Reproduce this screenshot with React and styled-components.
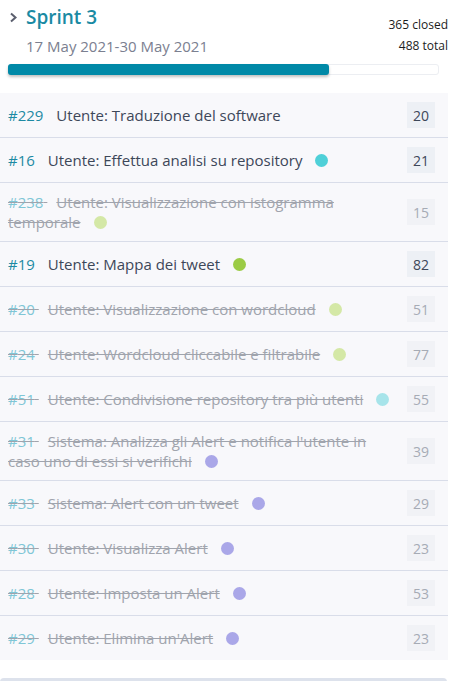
import styled, { createGlobalStyle } from 'styled-components';

const GlobalStyle = createGlobalStyle`
  body {
    margin: 0;
    background: #ffffff;
    font-family: "Open Sans", "Noto Sans", sans-serif;
  }
`;

const Page = styled.div`
  width: 454px;
  overflow: hidden;
`;

const Header = styled.div`
  display: flex;
  justify-content: space-between;
  align-items: flex-start;
  padding: 5px 6px 0 8px;
`;

const TitleBlock = styled.div`
  display: flex;
  flex-direction: column;
`;

const TitleRow = styled.div`
  display: flex;
  align-items: center;
  gap: 7px;
`;

const Title = styled.h2`
  margin: 0;
  font-size: 19px;
  font-weight: 600;
  color: #1a8aa3;
  line-height: 25px;
`;

const Dates = styled.div`
  margin-top: 6px;
  margin-left: 18px;
  font-size: 15px;
  color: #7b8090;
  line-height: 20px;
`;

const Stats = styled.div`
  display: flex;
  flex-direction: column;
  align-items: flex-end;
  gap: 5px;
  padding-top: 12px;
  font-size: 12px;
  color: #1c1c1c;
  line-height: 16px;
`;

const Track = styled.div`
  margin: 8px 15px 0 8px;
  height: 11px;
  border-radius: 3px;
  background: #ffffff;
  border: 1px solid #eceef2;
  box-sizing: border-box;
`;

const Fill = styled.div`
  height: 11px;
  margin-top: -1px;
  margin-left: -1px;
  border-radius: 3px;
  background: #0089a7;
  box-shadow: 0 2px 3px rgba(0, 0, 0, 0.25);
`;

const List = styled.ul`
  list-style: none;
  margin: 18px 6px 0 0;
  padding: 0;
  background: #f8f8fb;
`;

const Row = styled.li`
  display: flex;
  align-items: center;
  justify-content: space-between;
  padding: 9px 13px 9px 8px;
  min-height: 26px;
  border-bottom: 1px solid #d9dde9;
  &:last-child {
    border-bottom: none;
  }
`;

const Text = styled.div`
  flex: 1;
  font-size: 15px;
  line-height: 20px;
  padding-right: 12px;
  color: ${({ $done }) => ($done ? '#a0a4ad' : '#3d4759')};
  text-decoration: ${({ $done }) => ($done ? 'line-through' : 'none')};
`;

const Id = styled.span`
  color: ${({ $done }) => ($done ? '#7fc6d6' : '#1d8aa3')};
  margin-right: 9px;
`;

const Dot = styled.span`
  display: inline-block;
  width: 13px;
  height: 13px;
  border-radius: 50%;
  background: ${({ $color }) => $color};
  margin-left: 13px;
  vertical-align: -1px;
`;

const Count = styled.span`
  flex: none;
  width: 28px;
  height: 26px;
  display: flex;
  align-items: center;
  justify-content: center;
  font-size: 14px;
  background: ${({ $done }) => ($done ? '#f1f2f6' : '#edf0f5')};
  color: ${({ $done }) => ($done ? '#a6abb5' : '#3d4759')};
`;

const Footer = styled.div`
  margin: 18px 7px 0 0;
  height: 20px;
  border-radius: 4px;
  background: #dde2ec;
`;

const issues = [
  { id: 229, title: 'Utente: Traduzione del software', count: 20 },
  { id: 16, title: 'Utente: Effettua analisi su repository', dot: '#4fd0d8', count: 21 },
  { id: 238, title: 'Utente: Visualizzazione con istogramma temporale', dot: '#d4e8a6', count: 15, done: true },
  { id: 19, title: 'Utente: Mappa dei tweet', dot: '#9bcb45', count: 82 },
  { id: 20, title: 'Utente: Visualizzazione con wordcloud', dot: '#d4e8a6', count: 51, done: true },
  { id: 24, title: 'Utente: Wordcloud cliccabile e filtrabile', dot: '#d4e8a6', count: 77, done: true },
  { id: 51, title: 'Utente: Condivisione repository tra più utenti', dot: '#a7e4ea', count: 55, done: true },
  { id: 31, title: "Sistema: Analizza gli Alert e notifica l'utente in caso uno di essi si verifichi", dot: '#aaa7e8', count: 39, done: true },
  { id: 33, title: 'Sistema: Alert con un tweet', dot: '#aaa7e8', count: 29, done: true },
  { id: 30, title: 'Utente: Visualizza Alert', dot: '#aaa7e8', count: 23, done: true },
  { id: 28, title: 'Utente: Imposta un Alert', dot: '#aaa7e8', count: 53, done: true },
  { id: 29, title: "Utente: Elimina un'Alert", dot: '#aaa7e8', count: 23, done: true },
];

const closed = 365;
const total = 488;

export default function App() {
  return (
    <Page>
      <GlobalStyle />
      <Header>
        <TitleBlock>
          <TitleRow>
            <svg width="11" height="11" viewBox="0 0 11 11">
              <path d="M3 1.5 L7.5 5.5 L3 9.5" fill="none" stroke="#5b5f6e" strokeWidth="2" />
            </svg>
            <Title>Sprint 3</Title>
          </TitleRow>
          <Dates>17 May 2021-30 May 2021</Dates>
        </TitleBlock>
        <Stats>
          <span>{closed} closed</span>
          <span>{total} total</span>
        </Stats>
      </Header>
      <Track>
        <Fill style={{ width: `${(closed / total) * 100}%` }} />
      </Track>
      <List>
        {issues.map((it) => (
          <Row key={it.id}>
            <Text $done={it.done}>
              <Id $done={it.done}>#{it.id} </Id>
              {it.title}
              {it.dot && <Dot $color={it.dot} />}
            </Text>
            <Count $done={it.done}>{it.count}</Count>
          </Row>
        ))}
      </List>
      <Footer />
    </Page>
  );
}
